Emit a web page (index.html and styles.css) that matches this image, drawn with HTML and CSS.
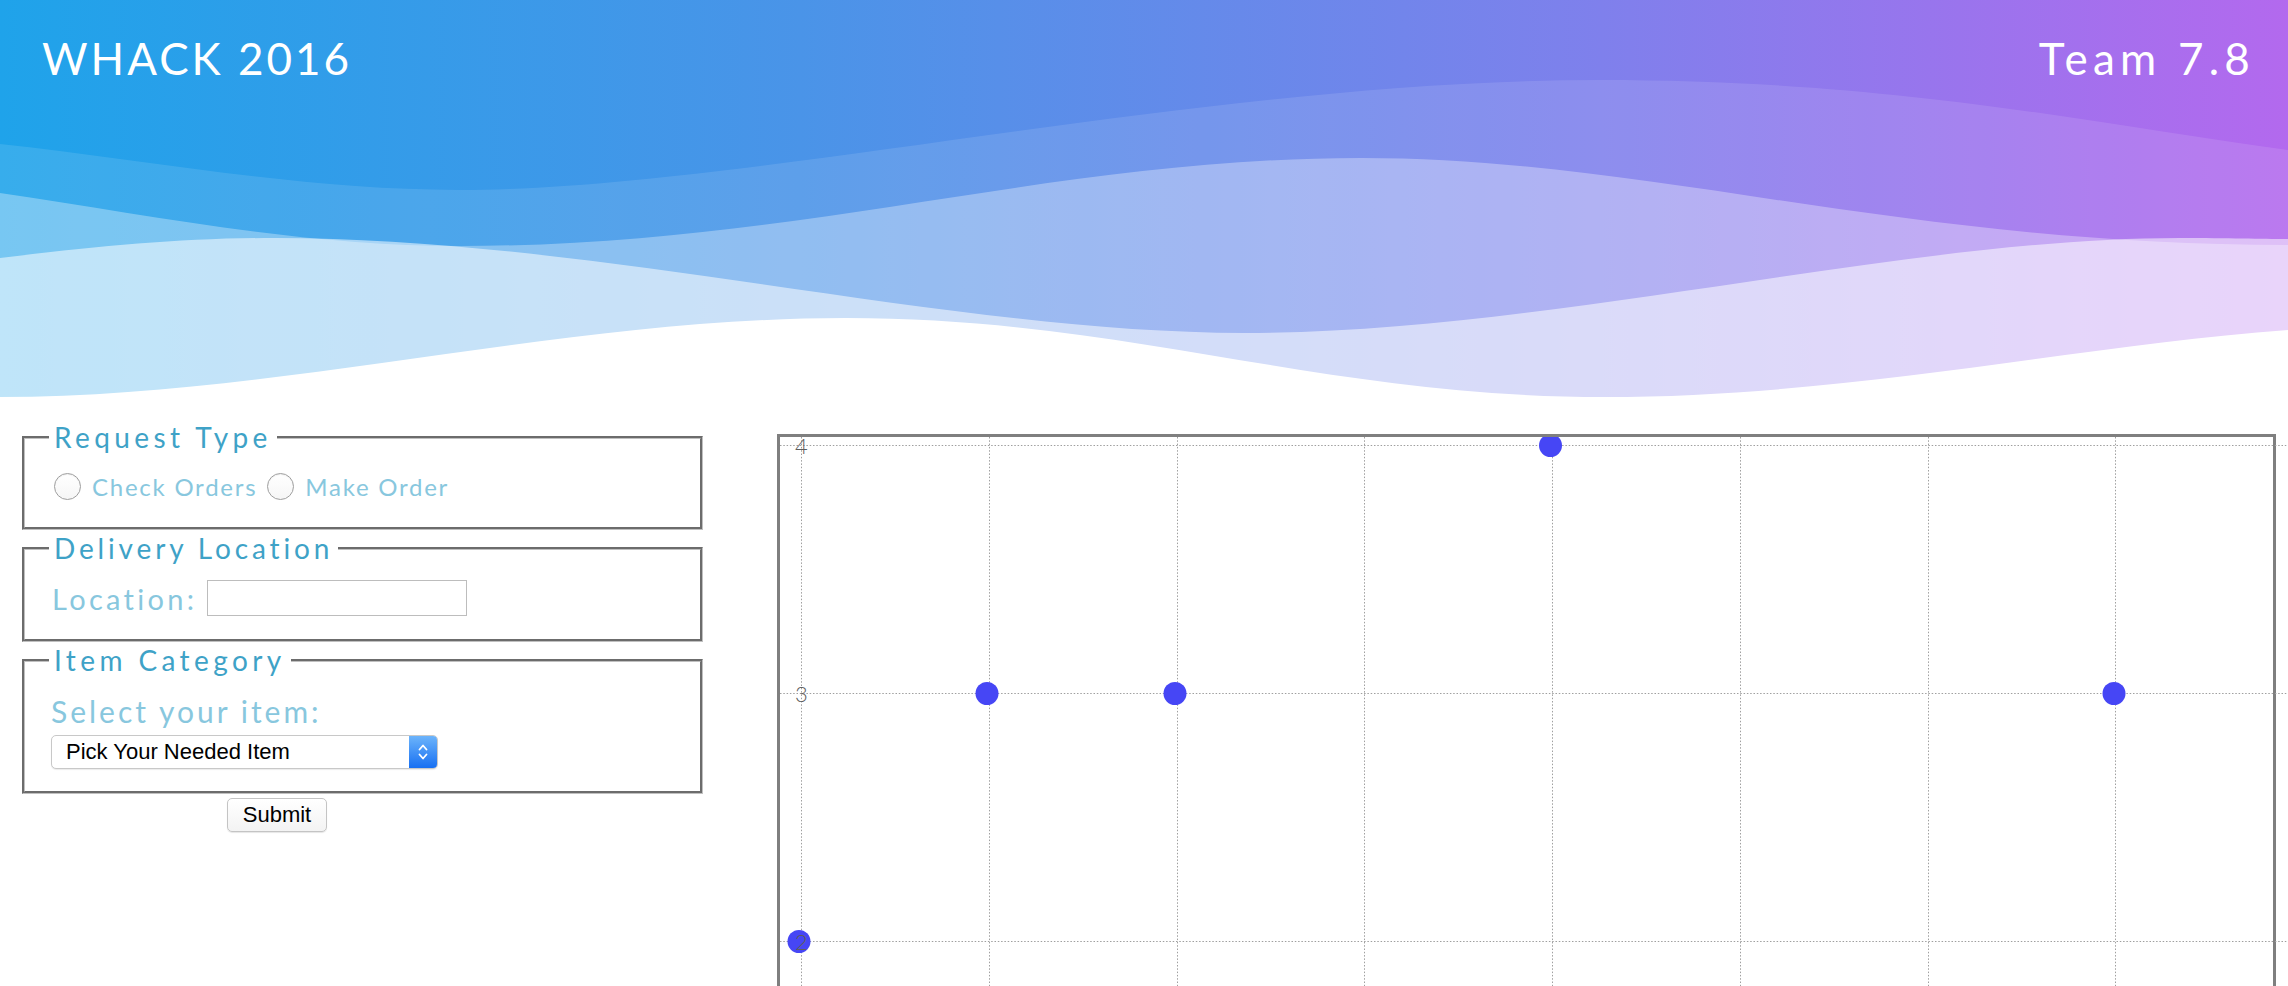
FILE: index.html
```html
<!DOCTYPE html>
<html lang="en">
<head>
<meta charset="utf-8">
<title>WHACK 2016</title>
<link rel="stylesheet" href="styles.css">
</head>
<body>
<header class="hero">
  <svg class="hero-waves" viewBox="0 0 2288 400" preserveAspectRatio="none" aria-hidden="true">
    <defs>
      <linearGradient id="heroGrad" x1="0" y1="0" x2="1" y2="0">
        <stop offset="0" stop-color="#1fa3ea"/>
        <stop offset="0.35" stop-color="#4a94e8"/>
        <stop offset="0.7" stop-color="#7f80ec"/>
        <stop offset="1" stop-color="#b369ee"/>
      </linearGradient>
    </defs>
    <rect x="0" y="0" width="2288" height="400" fill="url(#heroGrad)"/>
    <path d="M0,144 C150,160 300,190 459,190 C750,190 1200,80 1600,80 C1900,80 2100,125 2288,150 L2288,400 L0,400 Z" fill="#fff" fill-opacity="0.11"/>
    <path d="M0,193 C150,215 300,246 459,246 C800,246 1050,158 1361,158 C1650,158 1900,245 2288,245 L2288,400 L0,400 Z" fill="#fff" fill-opacity="0.32"/>
    <path d="M0,258 C100,246 180,238 275,238 C600,238 950,333 1244,333 C1550,333 1900,238 2180,238 C2230,238 2260,239 2288,239 L2288,400 L0,400 Z" fill="#fff" fill-opacity="0.53"/>
    <path d="M0,397 C280,397 560,318 846,318 C1130,318 1320,397 1605,397 C1850,397 2080,345 2288,330 L2288,400 L0,400 Z" fill="#fff"/>
  </svg>
  <div class="hero-bar">
    <h1 class="brand">WHACK 2016</h1>
    <div class="team">Team 7.8</div>
  </div>
</header>

<main class="content">
  <form class="order-form">
    <fieldset class="group group-type">
      <legend>Request Type</legend>
      <div class="radio-row">
        <label class="choice"><input type="radio" name="reqtype" value="check">Check Orders</label>
        <label class="choice"><input type="radio" name="reqtype" value="make">Make Order</label>
      </div>
    </fieldset>

    <fieldset class="group group-location">
      <legend>Delivery Location</legend>
      <div class="field-row">
        <label class="field-label" for="loc">Location:</label>
        <input class="text-input" id="loc" type="text">
      </div>
    </fieldset>

    <fieldset class="group group-item">
      <legend>Item Category</legend>
      <label class="select-label" for="item">Select your item:</label>
      <div class="select-wrap">
        <select id="item">
          <option>Pick Your Needed Item</option>
        </select>
        <span class="select-arrow">
          <svg width="12" height="22" viewBox="0 0 12 22" aria-hidden="true">
            <path d="M2.5 8.5 L6 4.5 L9.5 8.5" fill="none" stroke="#fff" stroke-width="1.8" stroke-linecap="round" stroke-linejoin="round"/>
            <path d="M2.5 13.5 L6 17.5 L9.5 13.5" fill="none" stroke="#fff" stroke-width="1.8" stroke-linecap="round" stroke-linejoin="round"/>
          </svg>
        </span>
      </div>
    </fieldset>

    <button class="submit" type="button">Submit</button>
  </form>

  <section class="chart">
    <svg class="chart-plot" width="1493" height="714" aria-hidden="true">
      <defs>
        <clipPath id="plotClip"><rect x="-10" y="0" width="1600" height="720"/></clipPath>
      </defs>
      <g class="grid">
        <line x1="0" y1="8.5" x2="1520" y2="8.5"/>
        <line x1="0" y1="256.5" x2="1520" y2="256.5"/>
        <line x1="0" y1="504.5" x2="1520" y2="504.5"/>
        <line x1="21.5" y1="0" x2="21.5" y2="714"/>
        <line x1="209.5" y1="0" x2="209.5" y2="714"/>
        <line x1="397.5" y1="0" x2="397.5" y2="714"/>
        <line x1="584.5" y1="0" x2="584.5" y2="714"/>
        <line x1="772.5" y1="0" x2="772.5" y2="714"/>
        <line x1="960.5" y1="0" x2="960.5" y2="714"/>
        <line x1="1148.5" y1="0" x2="1148.5" y2="714"/>
        <line x1="1335.5" y1="0" x2="1335.5" y2="714"/>
      </g>
      <g class="points" clip-path="url(#plotClip)">
        <circle cx="19" cy="504.5" r="11.5"/>
        <circle cx="207" cy="256.5" r="11.5"/>
        <circle cx="395" cy="256.5" r="11.5"/>
        <circle cx="770.5" cy="8.5" r="11.5"/>
        <circle cx="1334" cy="256.5" r="11.5"/>
      </g>
      <g class="axis">
        <text x="21.5" y="8.5">4</text>
        <text x="21.5" y="256.5">3</text>
        <text x="21.5" y="504.5">2</text>
      </g>
    </svg>
  </section>
</main>
</body>
</html>
```

FILE: styles.css
```css
* {
  box-sizing: border-box;
}

html,
body {
  margin: 0;
  padding: 0;
  background: #fff;
  overflow: hidden;
}

body {
  width: 2288px;
  font-family: "Lato", "Liberation Sans", sans-serif;
}

/* ---------- header ---------- */
.hero {
  display: grid;
  height: 400px;
}

.hero > * {
  grid-area: 1 / 1;
}

.hero-waves {
  display: block;
  width: 100%;
  height: 400px;
}

.hero-bar {
  display: flex;
  justify-content: space-between;
  align-items: flex-start;
  padding: 36px 33px 0 42px;
  color: #fff;
}

.brand,
.team {
  margin: 0;
  font-size: 44px;
  font-weight: 400;
  line-height: 1;
  letter-spacing: 3px;
}

.team {
  letter-spacing: 5.2px;
}

/* ---------- content ---------- */
.content {
  display: flex;
  align-items: flex-start;
  padding: 0 12px 0 22px;
}

.order-form {
  flex: none;
  width: 681px;
  padding-top: 21px;
}

.group {
  min-width: 0;
  margin: 0 0 2px;
  padding: 15px 20px 23px 26px;
  border: 3px groove #c0c0c0;
}

.group-item {
  padding-bottom: 22px;
}

.group legend {
  margin-left: -2px;
  padding: 0 5px;
  font-size: 28px;
  line-height: 1.2;
  letter-spacing: 4.4px;
  color: #3ea2c7;
}

.group-location legend {
  letter-spacing: 3.85px;
}

.radio-row {
  display: flex;
  align-items: center;
  height: 34px;
}

.choice {
  display: flex;
  align-items: center;
  font-size: 24px;
  letter-spacing: 1.75px;
  color: #88c7de;
}

.choice + .choice {
  margin-left: 7px;
}

.choice input {
  appearance: none;
  -webkit-appearance: none;
  flex: none;
  width: 27px;
  height: 27px;
  margin: 0 11px 0 3px;
  border: 1px solid #9e9e9e;
  border-radius: 50%;
  background: linear-gradient(#ffffff, #f6f6f6);
  box-shadow: inset 0 1px 1px rgba(0, 0, 0, 0.06);
}

.field-row {
  display: flex;
  align-items: center;
  height: 36px;
}

.field-label {
  margin: 0 10px 0 1px;
  font-size: 29px;
  letter-spacing: 3.3px;
  color: #88c7de;
}

.text-input {
  width: 260px;
  height: 36px;
  margin: 0;
  padding: 0 6px;
  border: 1px solid #bdbdbd;
  border-radius: 0;
  font: 20px "Liberation Sans", Arial, sans-serif;
}

.select-label {
  display: block;
  margin: 0 0 6px;
  font-size: 30px;
  line-height: 36px;
  letter-spacing: 3px;
  color: #88c7de;
}

.select-wrap {
  display: flex;
  width: 387px;
  height: 34px;
  border: 1px solid #c8c8c8;
  border-radius: 5px;
  overflow: hidden;
  background: #fff;
  box-shadow: 0 1px 1px rgba(0, 0, 0, 0.08);
}

.select-wrap select {
  appearance: none;
  -webkit-appearance: none;
  flex: 1;
  min-width: 0;
  margin: 0;
  padding: 0 0 0 14px;
  border: 0;
  outline: none;
  background: transparent;
  font: 22px "Liberation Sans", Arial, sans-serif;
  color: #000;
}

.select-arrow {
  flex: none;
  display: flex;
  align-items: center;
  justify-content: center;
  width: 28px;
  background: linear-gradient(#6cb4fb, #1870f2);
}

.submit {
  display: block;
  width: 100px;
  height: 34px;
  margin: 4px 0 0 205px;
  padding: 0;
  border: 1px solid #c4c4c4;
  border-radius: 5px;
  background: linear-gradient(#ffffff, #f3f3f3);
  box-shadow: 0 1px 1px rgba(0, 0, 0, 0.1);
  font: 22px "Liberation Sans", Arial, sans-serif;
  color: #000;
}

/* ---------- chart ---------- */
.chart {
  flex: none;
  width: 1499px;
  height: 720px;
  margin: 34px 0 0 74px;
  border: 3px solid #7f7f7f;
}

.chart-plot {
  display: block;
  overflow: visible;
}

.grid line {
  stroke: #9f9f9f;
  stroke-width: 1;
  stroke-dasharray: 1.5 1.8;
}

.points circle {
  fill: #4646f5;
}

.axis text {
  font-family: "Lato", "Liberation Sans", sans-serif;
  font-weight: 300;
  font-size: 22px;
  fill: #5e5e5e;
  text-anchor: middle;
  dominant-baseline: central;
}
```
